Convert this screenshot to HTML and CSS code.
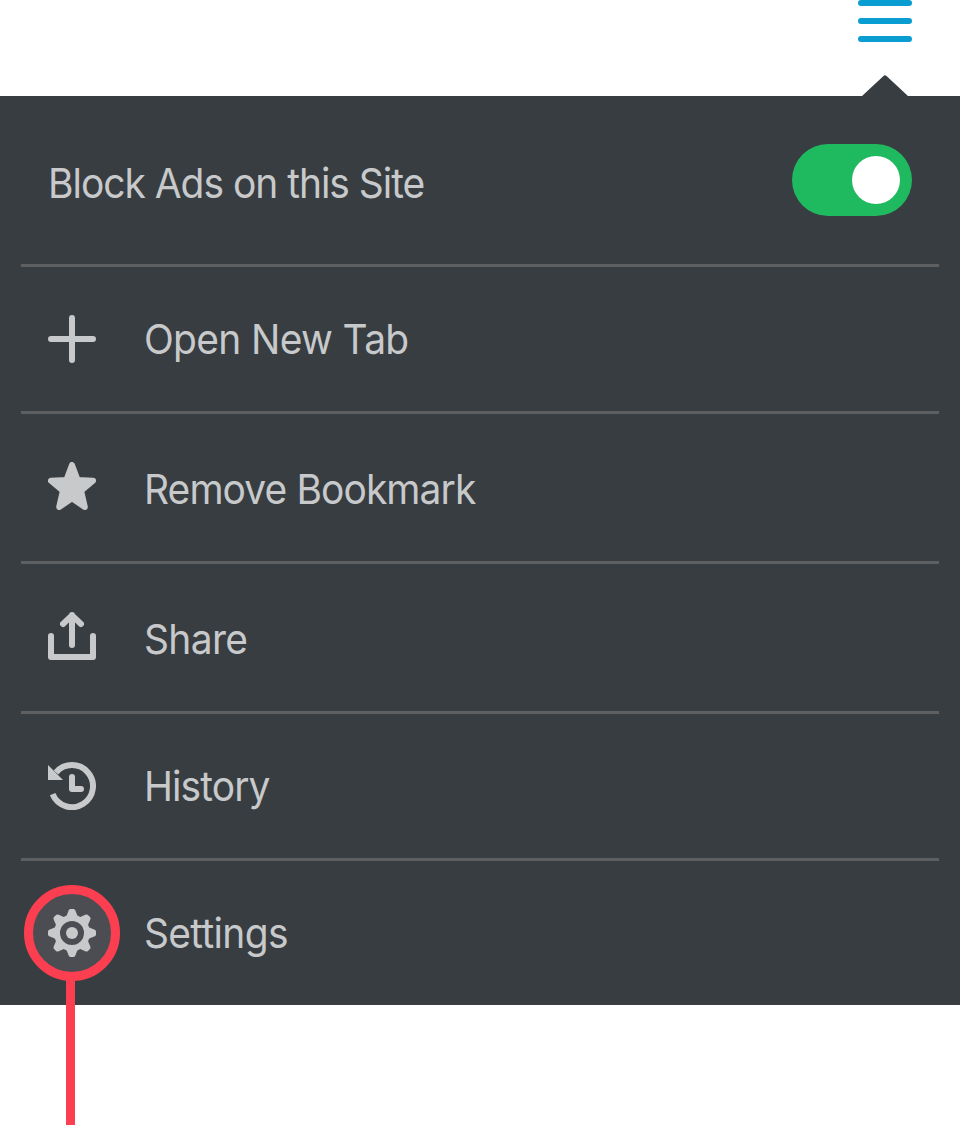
FILE: index.html
```html
<!DOCTYPE html>
<html lang="en">
<head>
<meta charset="utf-8">
<title>Browser menu</title>
<link rel="stylesheet" href="styles.css">
</head>
<body>
<header class="topbar">
  <svg class="burger" width="54" height="42" viewBox="0 0 54 42" fill="#099dd1"><rect width="54" height="6" rx="3"/><rect y="18" width="54" height="6" rx="3"/><rect y="36" width="54" height="6" rx="3"/></svg>
  <svg class="pointer" width="46" height="21" viewBox="0 0 46 21"><path d="M0 21 21.5 1Q23-.4 24.5 1L46 21Z" fill="#383d41"/></svg>
</header>
<main class="menu">
  <div class="row row-toggle">
    <span class="label label-block">Block Ads on this Site</span>
    <span class="toggle"><span class="knob"></span></span>
  </div>
  <div class="row">
    <svg class="icon" viewBox="0 0 48 48"><path class="line" d="M24 3V45M3 24H45"/></svg>
    <span class="label">Open New Tab</span>
  </div>
  <div class="row row-tall">
    <svg class="icon" viewBox="0 0 48 48"><path class="star" d="M24 3 29.6 18.1 45 18.8 33.1 28.8 36.8 45 24 36.2 11.2 45 14.9 28.8 3 18.8 18.4 18.1Z"/></svg>
    <span class="label label-tight">Remove Bookmark</span>
  </div>
  <div class="row row-tall">
    <svg class="icon" viewBox="0 0 48 48"><path class="line" d="M3 24V45H45V24M24 33V3M15 12 24 3.4 33 12"/></svg>
    <span class="label">Share</span>
  </div>
  <div class="row">
    <svg class="icon" viewBox="0 0 48 48"><path class="arc" d="M8 10.5A21 21 0 1 1 4.6 32.2"/><path class="solid" d="M0 3V18H15Z"/><path class="line" d="M24 15V27H33"/></svg>
    <span class="label label-tight">History</span>
  </div>
  <div class="row row-last">
    <span class="marker"></span>
    <svg class="icon" viewBox="0 0 48 48"><path id="tooth" class="solid" d="M18 8 20.8 1.2Q21.3 0 22.5 0H25.5Q26.7 0 27.2 1.2L30 8Z"/><use href="#tooth" transform="rotate(45 24 24)"/><use href="#tooth" transform="rotate(90 24 24)"/><use href="#tooth" transform="rotate(135 24 24)"/><use href="#tooth" transform="rotate(180 24 24)"/><use href="#tooth" transform="rotate(225 24 24)"/><use href="#tooth" transform="rotate(270 24 24)"/><use href="#tooth" transform="rotate(315 24 24)"/><circle class="ring" cx="24" cy="24" r="15"/><circle class="solid" cx="24" cy="24" r="6"/></svg>
    <span class="label">Settings</span>
  </div>
</main>
</body>
</html>
```
FILE: styles.css
```css
body {
  margin: 0;
  height: 1125px;
  overflow: hidden;
  background: #fff;
  font-family: Inter, "Liberation Sans", sans-serif;
}
.topbar {
  height: 96px;
  display: flex;
  flex-direction: column;
  align-items: flex-end;
  justify-content: space-between;
  box-sizing: border-box;
  padding-right: 48px;
}
.burger { display: block; }
.pointer { display: block; margin-right: 4px; }
.menu {
  background: #383d41;
  padding: 0 21px;
}
.row {
  display: flex;
  gap: 48px;
  box-sizing: border-box;
  height: 147px;
  padding: 48px 27px 0;
  border-bottom: 3px solid #5d5f61;
}
.row-toggle { height: 171px; justify-content: space-between; }
.row-tall { height: 150px; }
.row-last { position: relative; height: 144px; border-bottom: 0; }
.label {
  margin-left: -0.3px;
  font-size: 41px;
  line-height: 48px;
  letter-spacing: -0.7px;
  color: #c7c9cb;
  white-space: nowrap;
  transform: scaleX(0.95);
  transform-origin: left;
}
.label-tight { letter-spacing: -0.95px; }
.label-block { letter-spacing: -1.07px; }
.row-tall .label { padding-top: 3px; }
.row-toggle .label { padding-top: 15px; }
.toggle {
  display: flex;
  justify-content: flex-end;
  box-sizing: border-box;
  width: 120px;
  height: 72px;
  padding: 12px;
  border-radius: 36px;
  background: #1fb960;
}
.knob { width: 48px; height: 48px; border-radius: 50%; background: #fff; }
.icon { width: 48px; height: 48px; position: relative; color: #c7c9cb; flex: none; }
.solid, .icon use { fill: currentColor; }
.line, .arc, .ring { fill: none; stroke: currentColor; stroke-width: 6; }
.line { stroke-linecap: round; stroke-linejoin: round; }
.star { fill: currentColor; stroke: currentColor; stroke-width: 6; stroke-linejoin: round; }
.marker {
  position: absolute;
  left: 3px;
  top: 24px;
  width: 78px;
  height: 78px;
  border: 9px solid #fb3f50;
  border-radius: 50%;
  background: #4b4d53;
}
.marker::after {
  content: "";
  position: absolute;
  left: 33px;
  top: 86px;
  width: 9px;
  height: 145px;
  background: #fb3f50;
}
```
